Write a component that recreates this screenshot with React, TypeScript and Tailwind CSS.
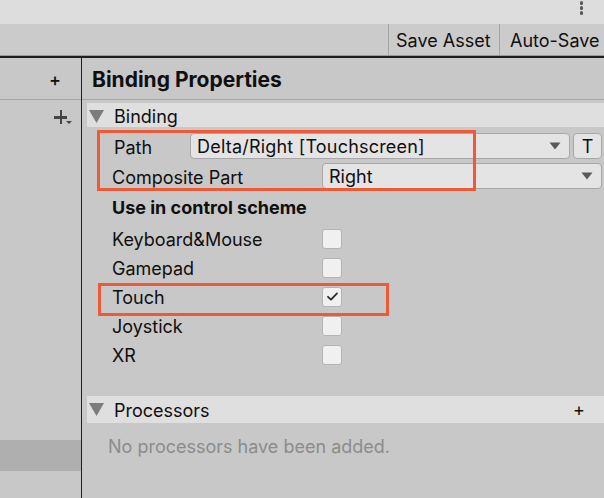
import React from "react";

const Check = ({ checked }: { checked?: boolean }) => (
  <div className="w-[20px] h-[20px] rounded-[3px] bg-[#f0f0f0] border border-[#b4b4b4] flex items-center justify-center">
    {checked && (
      <svg width="13" height="11" viewBox="0 0 13 11">
        <path d="M2 5.8 L5 8.6 L11 2.4" fill="none" stroke="#2a2a2a" strokeWidth="1.8" strokeLinecap="round" strokeLinejoin="round" />
      </svg>
    )}
  </div>
);

const Arrow = () => (
  <svg width="12" height="8" viewBox="0 0 12 8">
    <path d="M0.5 0.5 L11.5 0.5 L6 7.5 Z" fill="#5a5a5a" />
  </svg>
);

const Fold = () => (
  <svg width="15" height="13" viewBox="0 0 15 13">
    <path d="M0 0 L15 0 L7.5 13 Z" fill="#7c7c7c" />
  </svg>
);

export default function App() {
  const schemes = [
    { n: "Keyboard&Mouse" },
    { n: "Gamepad" },
    { n: "Touch", c: true },
    { n: "Joystick" },
    { n: "XR" },
  ];
  return (
    <div
      className="relative w-[604px] h-[498px] overflow-hidden bg-[#c8c8c8] flex flex-col text-[#0f0f0f]"
      style={{ fontFamily: "Inter, 'Noto Sans', sans-serif" }}
    >
      {/* top bar */}
      <div className="h-[24px] bg-[#dddddd] flex justify-end pr-[21px] shrink-0">
        <div className="flex flex-col gap-[1.5px] pt-[1px]">
          <div className="w-[3.5px] h-[3.5px] rounded-full bg-[#555]" />
          <div className="w-[3.5px] h-[3.5px] rounded-full bg-[#555]" />
          <div className="w-[3.5px] h-[3.5px] rounded-full bg-[#555]" />
        </div>
      </div>
      {/* toolbar */}
      <div className="h-[32px] bg-[#cbcbcb] border-b border-[#9a9a9a] flex justify-end shrink-0">
        <div className="border-l border-[#a3a3a3] pl-[7px] pt-[2px] flex items-center text-[18px] w-[111px] whitespace-nowrap">Save Asset</div>
        <div className="border-l border-[#a3a3a3] pl-[10px] pt-[2px] flex items-center text-[18px] w-[105px] whitespace-nowrap">Auto-Save</div>
      </div>
      <div className="h-[2px] bg-[#1e1e1e] shrink-0" />
      {/* main */}
      <div className="flex flex-1 min-h-0">
        {/* left panel */}
        <div className="w-[82px] border-r border-[#1e1e1e] flex flex-col shrink-0">
          <div className="h-[42px] border-b border-[#a6a6a6] flex items-center justify-end pr-[20px] pt-[2px] text-[18px] font-medium">+</div>
          <div className="h-[32px] flex items-start justify-end pr-[13px] pt-[2px]">
            <div className="relative w-[14px] h-[14px] mt-[8px]">
              <div className="absolute left-0 top-[6px] w-[13px] h-[2.5px] bg-[#444]" />
              <div className="absolute left-[5.5px] top-0 w-[2.5px] h-[14px] bg-[#444]" />
              <div className="absolute left-[12px] top-[11px] w-0 h-0 border-l-[3px] border-r-[3px] border-t-[3px] border-l-transparent border-r-transparent border-t-[#444]" />
            </div>
          </div>
          <div className="h-[308px]" />
          <div className="h-[31px] bg-[#afafaf]" />
        </div>
        {/* right panel */}
        <div className="flex-1 flex flex-col">
          <div className="h-[42px] border-b border-[#a6a6a6] flex items-center pl-[10px] pt-[3px] text-[21px] font-bold whitespace-nowrap">
            Binding Properties
          </div>
          <div className="mt-[3px] ml-[5px] h-[24px] bg-[#dfdfdf] flex items-center text-[18px] pt-[2px]">
            <div className="ml-[2px] mr-[10px]"><Fold /></div>
            Binding
          </div>
          <div className="mt-[6px] flex items-center h-[26px]">
            <div className="w-[108px] pl-[32px] text-[18px] pt-[2px]">Path</div>
            <div className="w-[380px] h-[26px] bg-[#e4e4e4] border border-[#a8a8a8] rounded-[4px] flex items-center pl-[6px] pr-[8px] text-[18px]">
              <span className="flex-1 whitespace-nowrap pt-[1px] tracking-[0.2px]">Delta/Right [Touchscreen]</span>
              <Arrow />
            </div>
            <div className="ml-[3px] w-[29px] h-[26px] bg-[#e4e4e4] border border-[#a8a8a8] rounded-[4px] flex items-center justify-center text-[18px]">T</div>
          </div>
          <div className="mt-[4px] flex items-center h-[26px]">
            <div className="w-[240px] pl-[30px] text-[18px] pt-[2px]">Composite Part</div>
            <div className="w-[280px] h-[26px] bg-[#e4e4e4] border border-[#a8a8a8] rounded-[4px] flex items-center pl-[6px] pr-[8px] text-[18px]">
              <span className="flex-1 pt-[1px]">Right</span>
              <Arrow />
            </div>
          </div>
          <div className="mt-[6px] pl-[30px] h-[24px] flex items-center text-[18px] font-bold pt-[1px]">Use in control scheme</div>
          <div className="mt-[5px] flex flex-col">
            {schemes.map((s) => (
              <div key={s.n} className="h-[29px] flex items-center">
                <div className="w-[240px] pl-[30px] text-[18px] pt-[1px]">{s.n}</div>
                <Check checked={s.c} />
              </div>
            ))}
          </div>
          <div className="mt-[27px] ml-[5px] h-[27px] bg-[#dfdfdf] flex items-center text-[18px]">
            <div className="ml-[2px] mr-[10px]"><Fold /></div>
            <span className="flex-1 pt-[2px]">Processors</span>
            <span className="mr-[19px] text-[18px]">+</span>
          </div>
          <div className="mt-[10px] pl-[26px] text-[18px] text-[#8c8c8c]">No processors have been added.</div>
        </div>
      </div>
      {/* annotation boxes */}
      <div className="absolute left-[97px] top-[130px] w-[379px] h-[61px] border-[3px] border-[#ef5a36]" />
      <div className="absolute left-[98px] top-[283px] w-[291px] h-[33px] border-[3px] border-[#ef5a36]" />
    </div>
  );
}
